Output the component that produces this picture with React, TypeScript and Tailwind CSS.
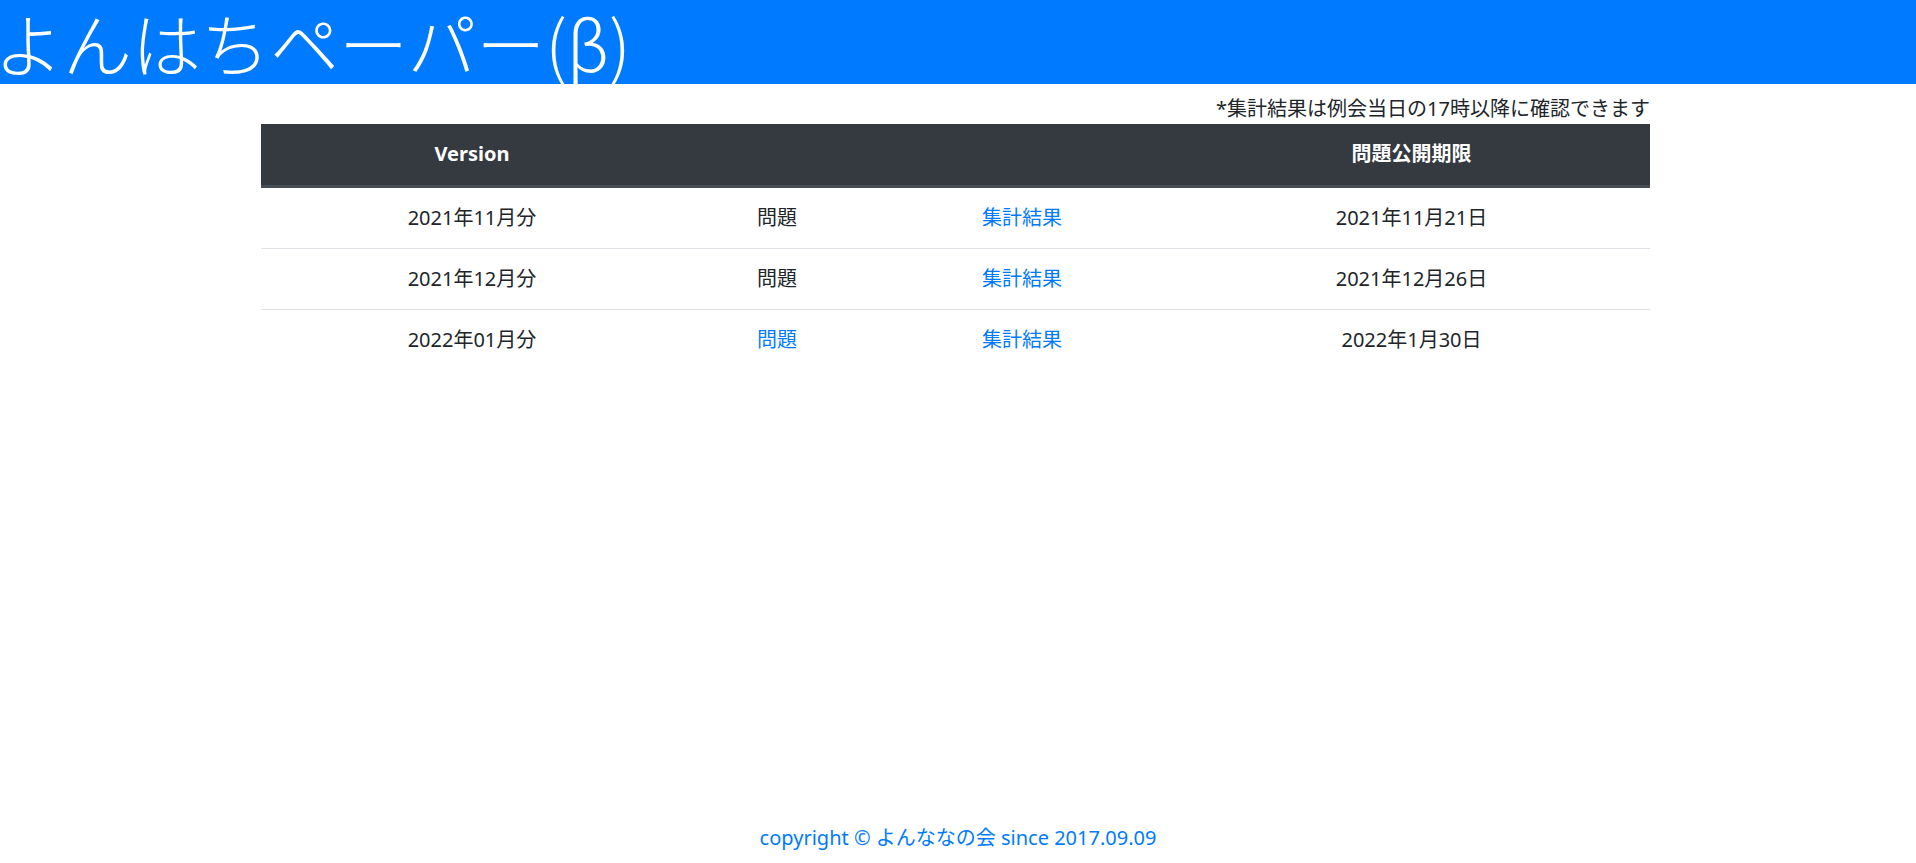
import React from 'react';

const rows = [
  { version: '2021年11月分', problemLink: false, deadline: '2021年11月21日' },
  { version: '2021年12月分', problemLink: false, deadline: '2021年12月26日' },
  { version: '2022年01月分', problemLink: true, deadline: '2022年1月30日' },
];

export default function App() {
  return (
    <div
      className="min-h-screen flex flex-col bg-white text-[#212529] text-[20px] leading-[30px]"
      style={{ fontFamily: '"Noto Sans", "Noto Sans CJK JP", sans-serif' }}
    >
      <header className="bg-[#007bff] h-[84px] overflow-visible">
        <h1
          className="text-white text-[69px] leading-[84px] font-light whitespace-nowrap -ml-[6px]"
          style={{ fontFamily: '"Noto Sans CJK JP", sans-serif' }}
        >
          よんはちペーパー(β)
        </h1>
      </header>

      <main className="w-[1389px] ml-[261px]">
        <p className="text-right mt-[10px]">*集計結果は例会当日の17時以降に確認できます</p>
        <table className="w-full text-center border-collapse">
          <thead>
            <tr className="bg-[#343a40] text-white">
              <th className="w-[422px] pt-[15px] pb-[16px] font-bold border-b-[3px] border-[#454d55]">Version</th>
              <th className="w-[188px] pt-[15px] pb-[16px] border-b-[3px] border-[#454d55]"></th>
              <th className="w-[302px] pt-[15px] pb-[16px] border-b-[3px] border-[#454d55]"></th>
              <th className="w-[477px] pt-[15px] pb-[16px] font-bold border-b-[3px] border-[#454d55]">問題公開期限</th>
            </tr>
          </thead>
          <tbody>
            {rows.map((r, i) => (
              <tr key={r.version} className={i > 0 ? 'border-t border-[#dee2e6]' : ''}>
                <td className="py-[15px]">{r.version}</td>
                <td className="py-[15px]">
                  {r.problemLink ? <a className="text-[#007bff]" href="#">問題</a> : '問題'}
                </td>
                <td className="py-[15px]">
                  <a className="text-[#007bff]" href="#">集計結果</a>
                </td>
                <td className="py-[15px]">{r.deadline}</td>
              </tr>
            ))}
          </tbody>
        </table>
      </main>

      <footer className="mt-auto pb-[10px] text-center">
        <a className="text-[#007bff]" href="#">copyright © よんななの会 since 2017.09.09</a>
      </footer>
    </div>
  );
}
